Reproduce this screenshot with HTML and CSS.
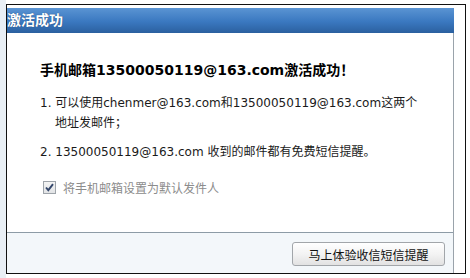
FILE: index.html
```html
<!DOCTYPE html>
<html lang="zh-CN">
<head>
<meta charset="utf-8">
<link rel="stylesheet" href="styles.css">
</head>
<body>
<div class="frame">
  <div class="dialog">
    <div class="title">激活成功</div>
    <div class="content">
      <h1 class="heading">手机邮箱13500050119@163.com激活成功！</h1>
      <ol class="list">
        <li>1. 可以使用chenmer@163.com和13500050119@163.com这两个地址发邮件；</li>
        <li>2. 13500050119@163.com 收到的邮件都有免费短信提醒。</li>
      </ol>
      <label class="check-row">
        <span class="checkbox"><svg width="11" height="11" viewBox="0 0 11 11"><path d="M2 5.5 L4.3 8.2 L9 2.2" fill="none" stroke="#34476b" stroke-width="1.9"/></svg></span>
        <span class="check-text">将手机邮箱设置为默认发件人</span>
      </label>
    </div>
    <div class="footer">
      <button class="btn" type="button">马上体验收信短信提醒</button>
    </div>
  </div>
</div>
</body>
</html>
```
FILE: styles.css
```css
html, body {
  margin: 0;
  padding: 0;
}
body {
  width: 470px;
  height: 278px;
  background: linear-gradient(to right, #e9eff5 6px, #ffffff 6px);
  font-family: "DejaVu Sans", "Noto Sans CJK SC", sans-serif;
  font-size: 12px;
  color: #222;
  padding-top: 4px;
  padding-left: 6px;
  box-sizing: border-box;
}
.frame {
  width: 460px;
  height: 270px;
  border: 1px solid #111;
  box-sizing: border-box;
  padding: 3px 11px 0 0;
  background: #fff;
}
.dialog {
  height: 265px;
  border-right: 1px solid #9aa3ab;
  display: flex;
  flex-direction: column;
  background: #fff;
}
.title {
  height: 25px;
  line-height: 25px;
  background: linear-gradient(to bottom, #5a94d3 0%, #3a78c0 55%, #2b609f 100%);
  color: #fff;
  font-size: 14px;
  font-weight: bold;
  text-shadow: 0 0 1px #1d3f6c;
  padding-left: 0;
  margin-right: -1px;
}
.content {
  flex: 1;
  padding: 27px 0 0 33px;
}
.heading {
  margin: 0 0 13px 0;
  font-size: 14px;
  line-height: 20px;
  font-weight: bold;
  color: #000;
}
.list {
  list-style: none;
  margin: 0;
  padding: 0;
  width: 380px;
}
.list li {
  line-height: 20px;
  padding-left: 15px;
  text-indent: -15px;
  margin-bottom: 9px;
  color: #1a1a1a;
}
.list li:last-child {
  margin-bottom: 0;
}
.check-row {
  display: flex;
  align-items: center;
  gap: 7px;
  margin: 15px 0 0 3px;
  height: 20px;
}
.checkbox {
  width: 11px;
  height: 11px;
  border: 1px solid #9ea4aa;
  background: linear-gradient(#f4f4f4, #e2e4e6);
  display: flex;
  align-items: center;
  justify-content: center;
}
.checkbox svg {
  display: block;
}
.check-text {
  color: #8c8c8c;
}
.footer {
  border-top: 1px solid #8d9ba6;
  background: #f3f7fa;
  display: flex;
  justify-content: flex-end;
  align-items: flex-start;
  padding: 9px 8px 0 0;
  box-sizing: border-box;
  height: 41px;
}
.btn {
  width: 153px;
  height: 24px;
  border: 1px solid #a2a6aa;
  border-radius: 3px;
  background: linear-gradient(#ffffff 0%, #f3f3f3 50%, #e2e2e2 100%);
  font-family: "DejaVu Sans", "Noto Sans CJK SC", sans-serif;
  font-size: 12px;
  color: #111;
  padding: 0;
}
```
